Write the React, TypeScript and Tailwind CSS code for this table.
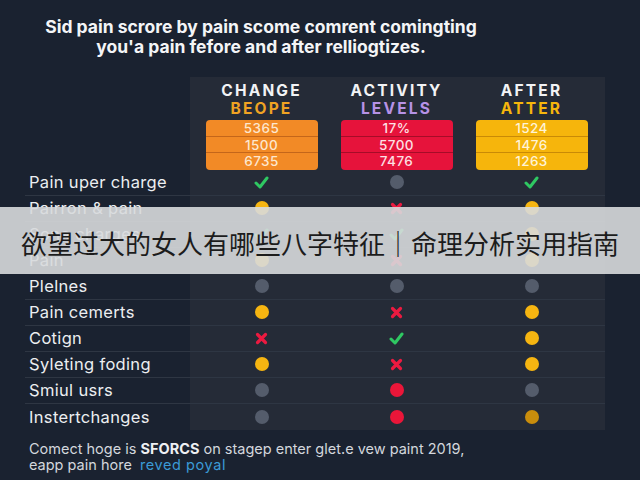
import React from "react";

type Mark = "check" | "x" | "yellow" | "gray" | "red" | "amber";

const rows: { label: string; marks: [Mark, Mark, Mark] }[] = [
  { label: "Pain uper charge", marks: ["check", "gray", "check"] },
  { label: "Pairron & pain", marks: ["yellow", "x", "yellow"] },
  { label: "Sone charges", marks: ["check", "check", "yellow"] },
  { label: "Pain", marks: ["yellow", "x", "yellow"] },
  { label: "Plelnes", marks: ["gray", "gray", "gray"] },
  { label: "Pain cemerts", marks: ["yellow", "x", "yellow"] },
  { label: "Cotign", marks: ["x", "check", "yellow"] },
  { label: "Syleting foding", marks: ["yellow", "x", "yellow"] },
  { label: "Smiul usrs", marks: ["gray", "red", "gray"] },
  { label: "Instertchanges", marks: ["gray", "red", "amber"] },
];

const columns = [
  { title: "CHANGE", sub: "BEOPE", subColor: "text-[#f0a323]", box: "bg-[#f28a26]", line: "border-[#c4661a]", text: "text-[#fde7cf]", values: ["5365", "1500", "6735"] },
  { title: "ACTIVITY", sub: "LEVELS", subColor: "text-[#b692e6]", box: "bg-[#e6133b]", line: "border-[#a60c28]", text: "text-[#fde0e4]", values: ["17%", "5700", "7476"] },
  { title: "AFTER", sub: "ATTER", subColor: "text-[#f6b60c]", box: "bg-[#f6b50c]", line: "border-[#c98a06]", text: "text-[#fff3d6]", values: ["1524", "1476", "1263"] },
];

function MarkIcon({ kind }: { kind: Mark }) {
  if (kind === "check") {
    return (
      <svg width="15" height="13" viewBox="0 0 15 13">
        <path d="M2 7 L6 11 L13 2" fill="none" stroke="#2fc862" strokeWidth="3" strokeLinecap="round" strokeLinejoin="round" />
      </svg>
    );
  }
  if (kind === "x") {
    return (
      <svg width="13" height="13" viewBox="0 0 13 13">
        <path d="M2.5 2.5 L10.5 10.5 M10.5 2.5 L2.5 10.5" fill="none" stroke="#ec1a40" strokeWidth="3.2" strokeLinecap="round" />
      </svg>
    );
  }
  const color =
    kind === "yellow" ? "bg-[#f6b511]" : kind === "gray" ? "bg-[#545c6b]" : kind === "red" ? "bg-[#ea1639]" : "bg-[#c98d0c]";
  return <div className={`w-[14px] h-[14px] rounded-full ${color}`} />;
}

export default function App() {
  return (
    <div className="relative w-[640px] h-[480px] overflow-hidden bg-[#1a2230] font-['Inter','Liberation_Sans',sans-serif] text-white">
      <h1 className="w-[522px] pt-[17px] text-center text-[17.5px] leading-[20px] font-bold text-[#f4f5f7]">
        Sid pain scrore by pain scome comrent comingting
        <br />
        you'a pain fefore and after relliogtizes.
      </h1>

      <div className="ml-[25px] mt-[20px] w-[580px]">
        <div className="flex">
          <div className="w-[165px]" />
          <div className="flex w-[415px] bg-[#252b37] pl-[4px] pt-[5px]">
            {columns.map((c) => (
              <div key={c.title} className="flex w-[135px] flex-col items-center">
                <div className="text-[15.5px] leading-[18px] font-bold tracking-[0.14em] text-[#f2f3f5]">{c.title}</div>
                <div className={`text-[15.5px] leading-[18px] font-bold tracking-[0.14em] ${c.subColor}`}>{c.sub}</div>
                <div className={`mt-[2px] w-[112px] overflow-hidden rounded-[4px] ${c.box}`}>
                  {c.values.map((v, i) => (
                    <div
                      key={v}
                      className={`h-[16.67px] text-center text-[13.5px] leading-[16px] font-medium tracking-[0.03em] ${c.text} ${i < 2 ? `border-b ${c.line}` : ""}`}
                    >
                      {v}
                    </div>
                  ))}
                </div>
              </div>
            ))}
          </div>
        </div>

        {rows.map((r, i) => (
          <div key={r.label} className={`flex h-[26px] ${i < rows.length - 1 ? "border-b border-[#2e3643]" : ""}`}>
            <div className="flex w-[165px] items-center pl-[4px] text-[16.5px] tracking-[0.02em] text-[#eceef1]">{r.label}</div>
            <div className="flex w-[415px] bg-[#252b37] pl-[4px]">
              {r.marks.map((m, j) => (
                <div key={j} className="flex w-[135px] items-center justify-center">
                  <MarkIcon kind={m} />
                </div>
              ))}
            </div>
          </div>
        ))}
      </div>

      <div className="ml-[29px] mt-[11px] text-[14.5px] leading-[16px] text-[#d3d7dd]">
        <div>
          Comect hoge is <span className="font-bold text-[#eef0f3]">SFORCS</span> on stagep enter glet.e vew paint 2019,
        </div>
        <div>
          eapp pain hore <span className="ml-[4px] tracking-[0.04em] text-[#3a9ad6]">reved poyal</span>
        </div>
      </div>

      <div className="absolute left-0 right-0 top-[207px] flex h-[67px] items-center justify-center bg-[#d8dadd]/90 pt-[3px]">
        <span className="font-['Noto_Sans_CJK_SC',sans-serif] text-[26px] text-[#1c1c1c]">
          欲望过大的女人有哪些八字特征｜命理分析实用指南
        </span>
      </div>
    </div>
  );
}
